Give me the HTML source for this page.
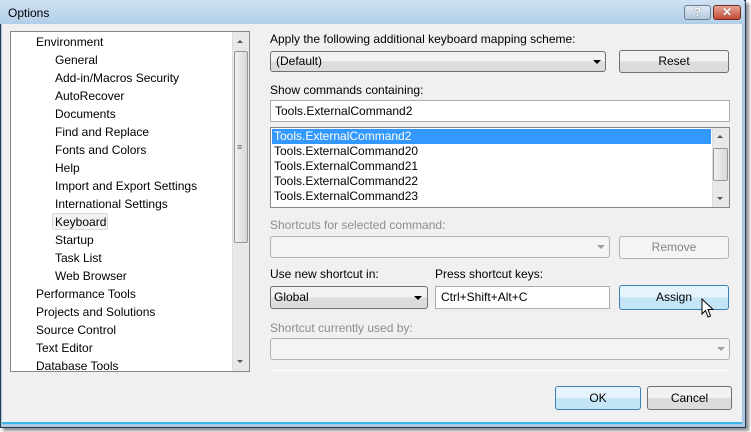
<!DOCTYPE html>
<html><head><meta charset="utf-8"><style>
*{box-sizing:border-box;margin:0;padding:0}
body{width:751px;height:432px;background:#fff;position:relative;overflow:hidden;font-family:"Liberation Sans",sans-serif;font-size:12px;color:#000}
.a{position:absolute}
.win{left:0;top:0;width:746px;height:428px;border:1px solid #2a3a4a;background:#a9c8e4;box-shadow:3px 3px 3px rgba(0,0,0,.45)}
.title{left:0;top:0;width:744px;height:24px;background:linear-gradient(#cfe2f3,#b2cfe8)}
.client{left:2px;top:24px;width:740px;height:400px;background:#f0f0f0;border-bottom:2px solid #38b6e6}
.t{position:absolute;white-space:nowrap;line-height:14px}
.box{position:absolute;background:#fff;border:1px solid #abadb3}
.btn{position:absolute;border:1px solid #707070;border-radius:3px;background:linear-gradient(#f2f2f2 50%,#dcdcdc 50%);text-align:center;line-height:20px}
.btnb{border-color:#3c7fb1;background:linear-gradient(#e5f4fc 50%,#c4e5f6 50%)}
.dis{border-color:#adb2b5;background:#f4f4f4;color:#838383}
.g{color:#8d8d8d}
.sb{position:absolute;background:#e8e8e8;border-left:1px solid #ddd}
.thumb{position:absolute;border:1px solid #969696;border-radius:2px;background:linear-gradient(90deg,#f0f0f0,#d8d8d8)}
.arr{position:absolute;width:0;height:0;border-left:3px solid transparent;border-right:3px solid transparent}
</style></head><body>
<div class="a win"></div>
<div class="a title"></div>
<div class="t" style="left:8px;top:6px;font-size:12px">Options</div>
<div class="a" style="left:684px;top:5px;width:27px;height:15px;border:1px solid #6b7e92;border-radius:3px;background:linear-gradient(#dfe9f4,#b4c8dd);color:#fff;font-weight:bold;text-align:center;line-height:13px;font-size:12px;text-shadow:0 0 1px #333">?</div>
<div class="a" style="left:713px;top:5px;width:28px;height:15px;border:1px solid #6e2b20;border-radius:3px;background:linear-gradient(#e8a496,#c24a33);color:#fff;font-weight:bold;text-align:center;line-height:13px;font-size:12px;text-shadow:0 0 1px #333">✕</div>
<div class="a client"></div>

<!-- tree -->
<div class="box" style="left:10px;top:31px;width:240px;height:341px;border-color:#828790"></div>
<div class="sb" style="left:232px;top:32px;width:17px;height:339px"></div>
<div class="arr" style="left:237px;top:40px;border-bottom:3px solid #555"></div>
<div class="arr" style="left:237px;top:360px;border-top:3px solid #555"></div>
<div class="thumb" style="left:234px;top:51px;width:14px;height:192px"></div>
<div class="t" style="left:237px;top:140px;font-size:9px;color:#666">≡</div>
<div class="a" style="left:52px;top:213px;width:56px;height:17px;border:1px solid #d9d9d9;border-radius:2px;background:#f3f3f3"></div>
<div class="t" style="left:36px;top:35px">Environment</div>
<div class="t" style="left:55px;top:53px">General</div>
<div class="t" style="left:55px;top:71px">Add-in/Macros Security</div>
<div class="t" style="left:55px;top:89px">AutoRecover</div>
<div class="t" style="left:55px;top:107px">Documents</div>
<div class="t" style="left:55px;top:125px">Find and Replace</div>
<div class="t" style="left:55px;top:143px">Fonts and Colors</div>
<div class="t" style="left:55px;top:161px">Help</div>
<div class="t" style="left:55px;top:179px">Import and Export Settings</div>
<div class="t" style="left:55px;top:197px">International Settings</div>
<div class="t" style="left:55px;top:215px">Keyboard</div>
<div class="t" style="left:55px;top:233px">Startup</div>
<div class="t" style="left:55px;top:251px">Task List</div>
<div class="t" style="left:55px;top:269px">Web Browser</div>
<div class="t" style="left:36px;top:287px">Performance Tools</div>
<div class="t" style="left:36px;top:305px">Projects and Solutions</div>
<div class="t" style="left:36px;top:323px">Source Control</div>
<div class="t" style="left:36px;top:341px">Text Editor</div>
<div class="t" style="left:36px;top:359px">Database Tools</div>

<!-- right -->
<div class="t" style="left:270px;top:32px">Apply the following additional keyboard mapping scheme:</div>
<div class="btn" style="left:270px;top:51px;width:336px;height:21px;text-align:left;padding-left:5px;line-height:19px">(Default)</div>
<div class="arr" style="left:593px;top:60px;border-top:4px solid #000;border-left-width:4px;border-right-width:4px"></div>
<div class="btn" style="left:619px;top:50px;width:110px;height:23px">Reset</div>

<div class="t" style="left:270px;top:83px">Show commands containing:</div>
<div class="box" style="left:270px;top:100px;width:460px;height:22px"></div>
<div class="t" style="left:275px;top:104px">Tools.ExternalCommand2</div>

<div class="box" style="left:270px;top:127px;width:460px;height:81px;border-color:#828790"></div>
<div class="a" style="left:272px;top:129px;width:439px;height:15px;background:#3399ff"></div>
<div class="sb" style="left:712px;top:128px;width:17px;height:79px"></div>
<div class="arr" style="left:717px;top:135px;border-bottom:3px solid #555"></div>
<div class="arr" style="left:717px;top:197px;border-top:3px solid #555"></div>
<div class="thumb" style="left:713px;top:148px;width:15px;height:33px"></div>
<div class="t" style="left:274px;top:129px;color:#fff">Tools.ExternalCommand2</div>
<div class="t" style="left:274px;top:144px">Tools.ExternalCommand20</div>
<div class="t" style="left:274px;top:159px">Tools.ExternalCommand21</div>
<div class="t" style="left:274px;top:174px">Tools.ExternalCommand22</div>
<div class="t" style="left:274px;top:189px">Tools.ExternalCommand23</div>

<div class="t g" style="left:270px;top:218px">Shortcuts for selected command:</div>
<div class="btn dis" style="left:270px;top:236px;width:340px;height:22px"></div>
<div class="arr" style="left:597px;top:245px;border-top:4px solid #a0a0a0;border-left-width:4px;border-right-width:4px"></div>
<div class="btn dis" style="left:619px;top:236px;width:110px;height:23px">Remove</div>

<div class="t" style="left:270px;top:267px">Use new shortcut in:</div>
<div class="t" style="left:435px;top:267px">Press shortcut keys:</div>
<div class="btn" style="left:270px;top:286px;width:158px;height:23px;text-align:left;padding-left:3px;line-height:21px">Global</div>
<div class="arr" style="left:414px;top:296px;border-top:4px solid #000;border-left-width:4px;border-right-width:4px"></div>
<div class="box" style="left:435px;top:286px;width:175px;height:23px"></div>
<div class="t" style="left:441px;top:290px">Ctrl+Shift+Alt+C</div>
<div class="btn btnb" style="left:619px;top:285px;width:110px;height:25px;line-height:23px">Assign</div>
<svg class="a" style="left:701px;top:298px" width="14" height="22" viewBox="0 0 14 22"><path d="M1 1 L1 16 L4.5 12.5 L7 19 L9.5 18 L7 11.5 L12 11.5 Z" fill="#fff" stroke="#000" stroke-width="1"/></svg>

<div class="t g" style="left:270px;top:321px">Shortcut currently used by:</div>
<div class="btn dis" style="left:270px;top:338px;width:460px;height:22px"></div>
<div class="arr" style="left:717px;top:347px;border-top:4px solid #a0a0a0;border-left-width:4px;border-right-width:4px"></div>

<div class="a" style="left:270px;top:370px;width:460px;height:1px;background:#a0a0a0;border-bottom:1px solid #fff"></div>
<div class="btn btnb" style="left:555px;top:386px;width:86px;height:24px;line-height:22px">OK</div>
<div class="btn" style="left:647px;top:386px;width:85px;height:24px;line-height:22px">Cancel</div>
</body></html>
